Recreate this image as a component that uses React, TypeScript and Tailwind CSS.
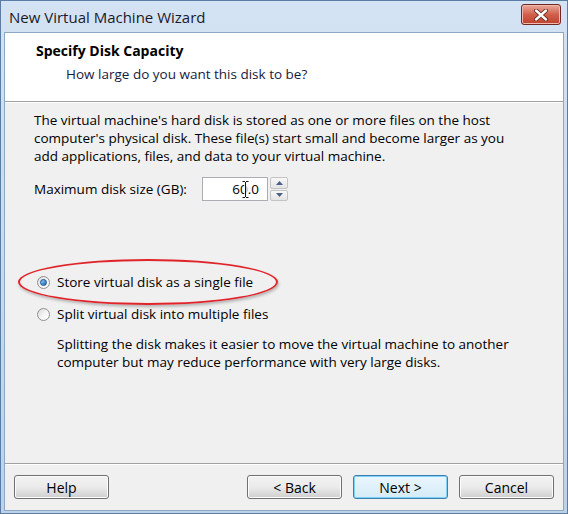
import React from 'react';

const FONT = { fontFamily: '"Open Sans", "Noto Sans", sans-serif' };

function Radio({ checked }: { checked?: boolean }) {
  return (
    <span className="flex h-[13px] w-[13px] shrink-0 items-center justify-center rounded-full border border-[#8e8f8f] bg-gradient-to-br from-[#d9d9d9] via-[#f4f4f4] to-white">
      {checked && (
        <span className="h-[7px] w-[7px] rounded-full border border-[#1b4f8a] bg-gradient-to-br from-[#8fd0f5] to-[#1a66b3]" />
      )}
    </span>
  );
}

function WinButton({ label, primary }: { label: string; primary?: boolean }) {
  return (
    <button
      className={
        'flex h-[24px] w-[95px] items-center justify-center rounded-[3px] border bg-gradient-to-b text-[14px] text-black ' +
        (primary
          ? 'border-[#3c7fb1] from-[#eaf6fd] to-[#d5ebf8] shadow-[inset_0_0_0_1px_#7ed2f5]'
          : 'border-[#707070] from-[#f2f2f2] via-[#ebebeb] to-[#cfcfcf] shadow-[inset_0_0_0_1px_#fcfcfc]')
      }
    >
      {label}
    </button>
  );
}

export default function App() {
  return (
    <div
      className="relative flex h-[514px] w-[568px] flex-col overflow-hidden border border-[#5b7da3] bg-gradient-to-b from-[#d4e3f3] to-[#bcd2e9] text-[#1e1e1e]"
      style={FONT}
    >
      {/* title bar */}
      <div className="flex h-[31px] shrink-0 items-center justify-between pl-[8px] pr-[6px]">
        <span className="pt-[1px] text-[15px] text-[#1a1a2a]">New Virtual Machine Wizard</span>
        <button className="mb-[4px] flex h-[21px] w-[40px] items-center justify-center rounded-[3px] border border-[#6e2a22] bg-gradient-to-b from-[#e9a99b] via-[#d0604b] to-[#c0402c] shadow-[inset_0_0_0_1px_#f1b8ab]">
          <svg width="14" height="12" viewBox="0 0 14 12" aria-hidden>
            <path
              d="M2 1.5l10 9M12 1.5l-10 9"
              stroke="#5a1d16"
              strokeWidth="4"
              strokeLinecap="round"
            />
            <path
              d="M2 1.5l10 9M12 1.5l-10 9"
              stroke="white"
              strokeWidth="2.4"
              strokeLinecap="round"
            />
          </svg>
        </button>
      </div>

      {/* client area */}
      <div className="mx-[3px] mb-[2px] flex flex-1 flex-col border border-[#8ea8c4] bg-[#f0f0f0]">
        <header className="flex h-[69px] shrink-0 flex-col border-b border-[#a0a0a0] bg-white pl-[31px] pt-[8px] shadow-[0_1px_0_#ffffff]">
          <h1 className="text-[14px] font-bold leading-[20px] text-black">Specify Disk Capacity</h1>
          <p className="pl-[30px] pt-[3px] text-[13.5px] leading-[20px] text-[#1a1a40]">
            How large do you want this disk to be?
          </p>
        </header>

        <main className="flex flex-1 flex-col pl-[29px] pr-[16px] pt-[9px] text-[13.5px] text-black">
          <p className="w-[485px] leading-[18px]">
            The virtual machine's hard disk is stored as one or more files on the host computer's
            physical disk. These file(s) start small and become larger as you add applications,
            files, and data to your virtual machine.
          </p>

          <div className="mt-[12px] flex items-center">
            <span className="w-[168px]">Maximum disk size (GB):</span>
            <div className="relative flex h-[24px] w-[66px] items-center justify-end border border-[#abadb3] bg-white pr-[8px]">
              60.0
              <svg
                className="absolute left-[39px] top-[3px]"
                width="7"
                height="17"
                viewBox="0 0 7 17"
                aria-hidden
              >
                <path
                  d="M0.5 0.5h2.5M4 0.5h2.5M3.5 1v15M0.5 16.5h2.5M4 16.5h2.5"
                  stroke="white"
                  strokeWidth="2.5"
                />
                <path
                  d="M0.5 0.5h2.5M4 0.5h2.5M3.5 1v15M0.5 16.5h2.5M4 16.5h2.5"
                  stroke="#111"
                  strokeWidth="1"
                />
              </svg>
            </div>
            <div className="ml-[2px] flex h-[24px] w-[18px] flex-col gap-[1px]">
              <span className="flex flex-1 items-center justify-center rounded-[2px] border border-[#c3c3c3] bg-gradient-to-b from-[#f8f8f8] to-[#e4e4e4]">
                <svg width="7" height="4" viewBox="0 0 7 4" aria-hidden>
                  <path d="M0 4L3.5 0L7 4z" fill="#4a5f87" />
                </svg>
              </span>
              <span className="flex flex-1 items-center justify-center rounded-[2px] border border-[#c3c3c3] bg-gradient-to-b from-[#f8f8f8] to-[#e4e4e4]">
                <svg width="7" height="4" viewBox="0 0 7 4" aria-hidden>
                  <path d="M0 0L3.5 4L7 0z" fill="#4a5f87" />
                </svg>
              </span>
            </div>
          </div>

          <div className="mt-[71px] flex flex-col gap-[12px]">
            <label className="flex items-center gap-[7px] pl-[3px]">
              <Radio checked />
              Store virtual disk as a single file
            </label>
            <label className="flex items-center gap-[7px] pl-[3px]">
              <Radio />
              Split virtual disk into multiple files
            </label>
          </div>
          <p className="mt-[10px] pl-[23px] leading-[18px]">
            Splitting the disk makes it easier to move the virtual machine to another computer but
            may reduce performance with very large disks.
          </p>
        </main>

        <footer className="flex h-[47px] shrink-0 items-center border-t border-[#a0a0a0] pl-[9px] pr-[9px] shadow-[inset_0_1px_0_#ffffff]">
          <WinButton label="Help" />
          <div className="flex-1" />
          <div className="flex gap-[11px]">
            <WinButton label="< Back" />
            <WinButton label="Next >" primary />
            <WinButton label="Cancel" />
          </div>
        </footer>
      </div>

      {/* red annotation ellipse */}
      <div className="pointer-events-none absolute left-[17px] top-[258px] h-[46px] w-[260px] rounded-[50%] border-2 border-[#e0242a] shadow-[1px_2px_3px_rgba(0,0,0,0.25)]" />
    </div>
  );
}
